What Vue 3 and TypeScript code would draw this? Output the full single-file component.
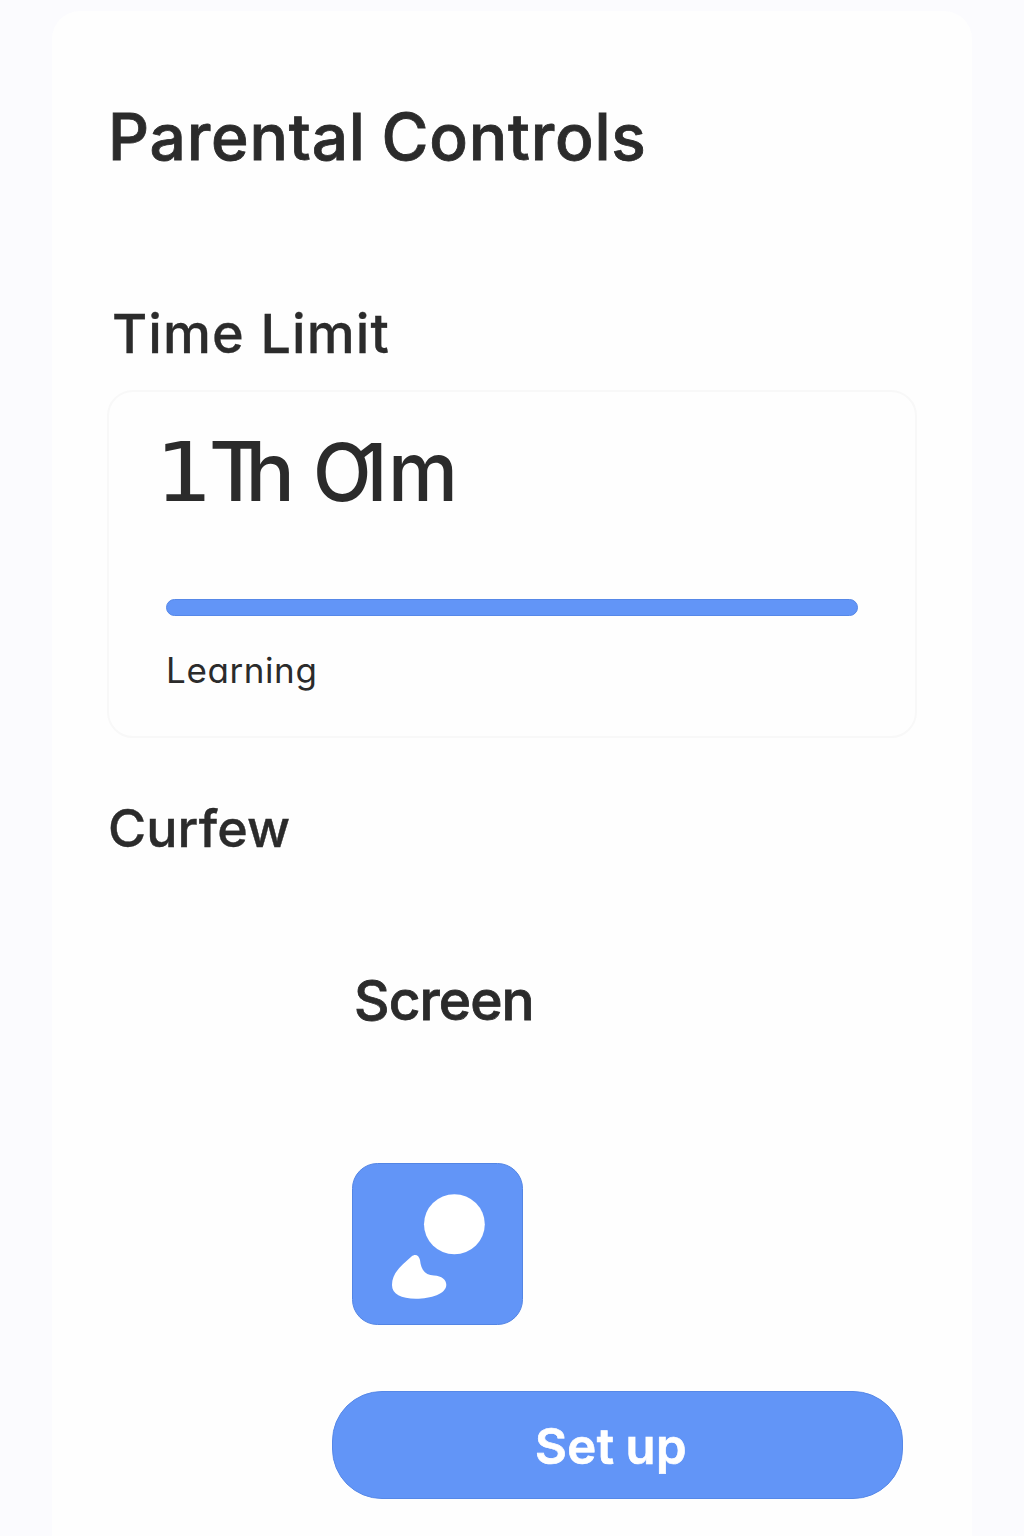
<script setup lang="ts">
import { ref } from 'vue'

const category = ref('Learning')
const progress = ref(100)
</script>

<template>
  <main class="page">
    <section class="sheet">
      <h1 class="title">Parental Controls</h1>

      <h2 class="limit-heading">Time Limit</h2>
      <div class="limit-card">
        <p class="time">
          <span class="one">1</span><span class="hours">Th</span>
          <span class="minutes">O1</span><span class="unit">m</span>
        </p>
        <div class="track"><div class="fill" :style="{ width: progress + '%' }"></div></div>
        <p class="category">{{ category }}</p>
      </div>

      <h2 class="curfew">Curfew</h2>
      <h2 class="screen">Screen</h2>

      <svg class="tile" viewBox="0 0 171 162" aria-hidden="true">
        <rect x=".5" y=".5" width="170" height="161" rx="25" fill="#6295f7" stroke="#5385e4" />
        <ellipse cx="102.400" cy="61.300" rx="30.400" ry="30" fill="#fff" />
        <path
          d="M40 122C40 110 49 103 59.500 93.500C63 90.500 67 92 68 97C69 107 73 112 82 112.500C90 113 94.500 117 94.300 122C94 131 79 135.700 64 135.700C49 135.700 40 131 40 122Z"
          fill="#fff"
        />
      </svg>

      <button class="setup" type="button">Set up</button>
    </section>
  </main>
</template>

<style>
body {
  margin: 0;
  background: #fbfbfe;
}
</style>

<style scoped>
.page {
  height: 1536px;
  overflow: hidden;
  padding: 11px 52px 0;
  box-sizing: border-box;
  font-family: Inter, "Open Sans", sans-serif;
  color: #2b2b2b;
}
.sheet {
  display: flex;
  flex-direction: column;
  align-items: flex-start;
  height: 1560px;
  padding: 90px 55px 0;
  box-sizing: border-box;
  background: #fefefe;
  border-radius: 28px;
}
h1,
h2,
p {
  margin: 0;
  white-space: nowrap;
}
.title {
  margin-left: 1px;
  font-size: 64px;
  line-height: 72px;
  font-weight: 500;
  letter-spacing: 0.8px;
  word-spacing: -2px;
  -webkit-text-stroke: 0.8px #2b2b2b;
}
.limit-heading {
  margin: 129px 0 24px 5px;
  font-size: 54px;
  line-height: 64px;
  font-weight: 500;
  letter-spacing: 1.1px;
  -webkit-text-stroke: 0.3px #2b2b2b;
}
.limit-card {
  width: 810px;
  height: 348px;
  box-sizing: border-box;
  padding: 35px 57px 0 57px;
  border: 2px solid #f8f8f8;
  border-radius: 26px;
}
.time {
  display: flex;
  align-items: baseline;
  height: 90px;
  font-size: 82px;
  line-height: 90px;
  font-weight: 500;
}
.time span {
  flex: none;
  transform-origin: 0 75px;
}
.one {
  width: 56px;
  margin-left: -12px;
  font-family: "DejaVu Sans Mono", monospace;
  font-weight: 400;
  transform: scaleX(1.15);
}
.hours {
  width: 104px;
  margin-left: -1px;
  letter-spacing: -17px;
}
.minutes {
  width: 75px;
  letter-spacing: -17px;
  transform: scale(0.93, 0.97);
}
.unit {
  transform: scaleX(0.96);
}
.track {
  width: 692px;
  height: 17px;
  margin-top: 82px;
}
.fill {
  height: 100%;
  box-sizing: border-box;
  border: 1px solid #5688e8;
  border-radius: 9px;
  background: #6295f7;
}
.category {
  margin-top: 32px;
  font-size: 35px;
  line-height: 44px;
  letter-spacing: 0.6px;
  font-feature-settings: "cv11";
}
.curfew {
  margin: 61px 0 0 1px;
  font-size: 52px;
  line-height: 60px;
  font-weight: 500;
  letter-spacing: 0.1px;
  -webkit-text-stroke: 0.4px #2b2b2b;
}
.screen {
  margin: 109px 0 0 247px;
  font-size: 55px;
  line-height: 64px;
  font-weight: 500;
  letter-spacing: -0.9px;
  -webkit-text-stroke: 0.8px #2b2b2b;
}
.tile {
  display: block;
  width: 171px;
  height: 162px;
  margin: 131px 0 0 245px;
}
.setup {
  width: 571px;
  height: 108px;
  margin: 66px 0 0 225px;
  padding: 4px 13px 0 0;
  border: 1px solid #5688e8;
  border-radius: 50px;
  background: #6295f7;
  color: #fff;
  font: 600 49px/56px Inter, "Open Sans", sans-serif;
  letter-spacing: 0.5px;
  word-spacing: -2px;
  -webkit-text-stroke: 0.7px #fff;
}
</style>
